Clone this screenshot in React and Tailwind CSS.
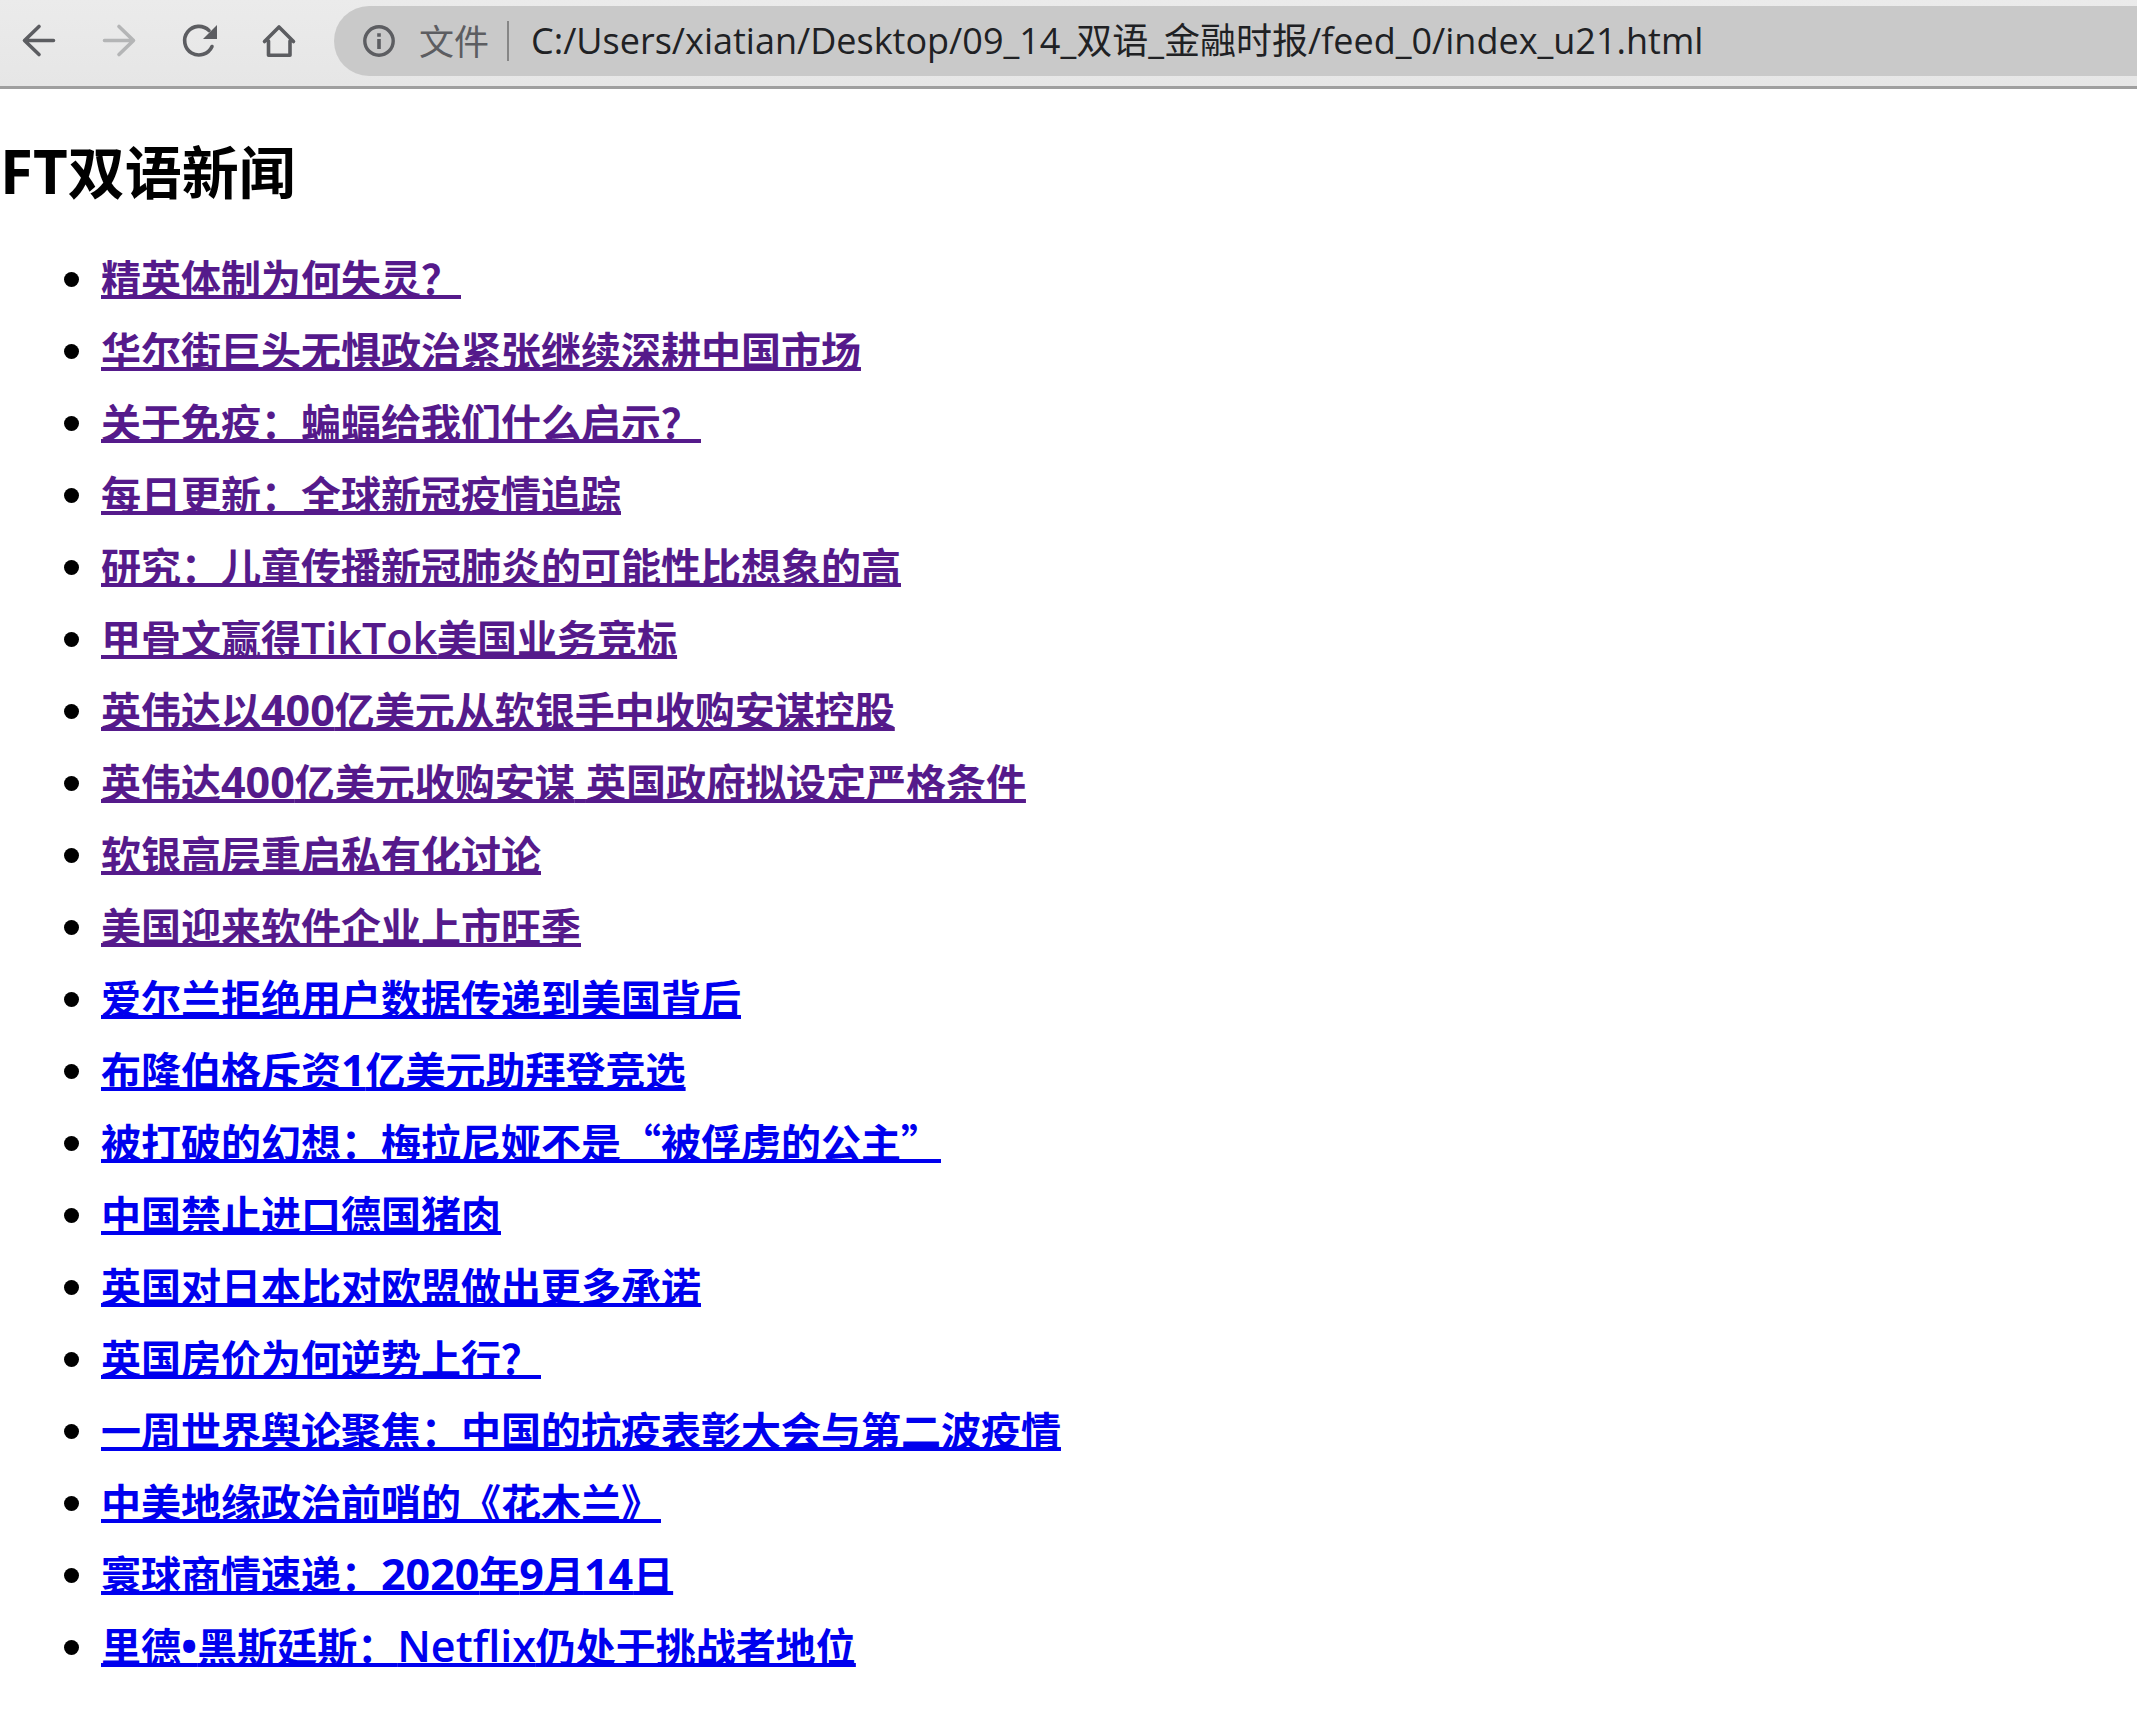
import React, { useState } from 'react';

const articles = [
    { title: '精英体制为何失灵？', visited: true },
    { title: '华尔街巨头无惧政治紧张继续深耕中国市场', visited: true },
    { title: '关于免疫：蝙蝠给我们什么启示？', visited: true },
    { title: '每日更新：全球新冠疫情追踪', visited: true },
    { title: '研究：儿童传播新冠肺炎的可能性比想象的高', visited: true },
    { title: '甲骨文赢得TikTok美国业务竞标', visited: true },
    { title: '英伟达以400亿美元从软银手中收购安谋控股', visited: true },
    { title: '英伟达400亿美元收购安谋 英国政府拟设定严格条件', visited: true },
    { title: '软银高层重启私有化讨论', visited: true },
    { title: '美国迎来软件企业上市旺季', visited: true },
    { title: '爱尔兰拒绝用户数据传递到美国背后', visited: false },
    { title: '布隆伯格斥资1亿美元助拜登竞选', visited: false },
    { title: '被打破的幻想：梅拉尼娅不是“被俘虏的公主”', visited: false },
    { title: '中国禁止进口德国猪肉', visited: false },
    { title: '英国对日本比对欧盟做出更多承诺', visited: false },
    { title: '英国房价为何逆势上行？', visited: false },
    { title: '一周世界舆论聚焦：中国的抗疫表彰大会与第二波疫情', visited: false },
    { title: '中美地缘政治前哨的《花木兰》', visited: false },
    { title: '寰球商情速递：2020年9月14日', visited: false },
    { title: '里德•黑斯廷斯：Netflix仍处于挑战者地位', visited: false }
];

// Latin letters and digits are set a little larger than the Chinese text around them
const MixedText = ({ text, latinClass, letterClass = '' }) =>
    text.split(/([A-Za-z]+|[0-9 •]+)/).map((part, index) =>
        index % 2 === 1 ? (
            <span key={index} className={`${latinClass} ${/[A-Za-z]/.test(part) ? letterClass : ''}`}>{part}</span>
        ) : (
            part
        )
    );

const ToolbarButton = ({ label, className, children }) => (
    <button type="button" aria-label={label} className={className}>
        <svg
            viewBox="0 0 40 40"
            className="block size-10"
            fill="none"
            stroke="currentColor"
            strokeWidth="3.6"
            strokeLinecap="round"
            strokeLinejoin="round"
        >
            {children}
        </svg>
    </button>
);

const Toolbar = () => {
    const [url, setUrl] = useState('C:/Users/xiatian/Desktop/09_14_双语_金融时报/feed_0/index_u21.html');

    return (
        <header className="flex items-center border-b-3 border-[#9f9f9f] bg-linear-to-b from-[#ebebeb] to-[#e6e6e6] pt-1.5 pb-2.5 pl-[19px] font-['Open_Sans','Noto_Sans_CJK_SC',sans-serif] text-[#5c5d61]">
            <nav className="flex gap-10">
                <ToolbarButton label="后退">
                    <path d="M34.5 19.5H5.5M20 5.5l-14.5 14L20 33.5" />
                </ToolbarButton>
                <ToolbarButton label="前进" className="text-[#b4b5b6]">
                    <path d="M5.5 19.5h29M20 5.5l14.5 14L20 33.5" />
                </ToolbarButton>
                <ToolbarButton label="重新加载">
                    <path d="M30 9.5a14.3 14.3 0 1 0 3 16" />
                    <path d="M38 4v14H24z" fill="currentColor" stroke="none" />
                </ToolbarButton>
                <ToolbarButton label="主页">
                    <path d="M9.5 20v14.2h21.5V20M5.5 20.5L20 6l14.5 14.5" />
                </ToolbarButton>
            </nav>
            <div className="ml-[35px] flex h-[70px] min-w-0 flex-1 items-center rounded-l-full bg-[#c9c9c9] pl-[29px]">
                <button type="button" className="flex shrink-0 items-center gap-6 text-[35px] leading-none">
                    <svg viewBox="0 0 32 32" className="size-8" fill="none" stroke="currentColor" strokeWidth="3.4">
                        <circle cx="16" cy="16" r="14.2" />
                        <path d="M16 14v10M16 8.2v3.6" strokeWidth="3.6" />
                    </svg>
                    文件
                </button>
                <span className="ml-[18px] h-10 w-0.5 shrink-0 bg-[#868686]" />
                <input
                    type="text"
                    aria-label="地址"
                    value={url}
                    onChange={(e) => setUrl(e.target.value)}
                    className="ml-[22px] h-14 min-w-0 flex-1 bg-transparent pb-1.5 text-[36px] text-[#202124] outline-none"
                />
            </div>
        </header>
    );
};

const App = () => {
    return (
        <div lang="zh-CN" className="min-h-screen bg-white">
            <Toolbar />
            <main className="font-['Noto_Sans_CJK_SC',sans-serif] font-bold text-black">
                <h1 className="mt-11 mb-[34px] text-[57px] leading-[72px]">
                    <MixedText text="FT双语新闻" latinClass="font-['Open_Sans',sans-serif] text-[60px]" />
                </h1>
                <ul className="list-disc pl-[101px] text-[40px] leading-[72px]">
                    {articles.map(({ title, visited }) => (
                        <li key={title} className="h-18">
                            <a
                                href="#"
                                className={`underline decoration-4 underline-offset-1 [text-decoration-skip-ink:none] ${visited ? 'text-[#551a8b]' : 'text-[#0000ee]'}`}
                            >
                                <MixedText
                                    text={title}
                                    latinClass="font-['Open_Sans',sans-serif] text-[43px]"
                                    letterClass="font-semibold"
                                />
                            </a>
                        </li>
                    ))}
                </ul>
            </main>
        </div>
    );
};

export default App;
